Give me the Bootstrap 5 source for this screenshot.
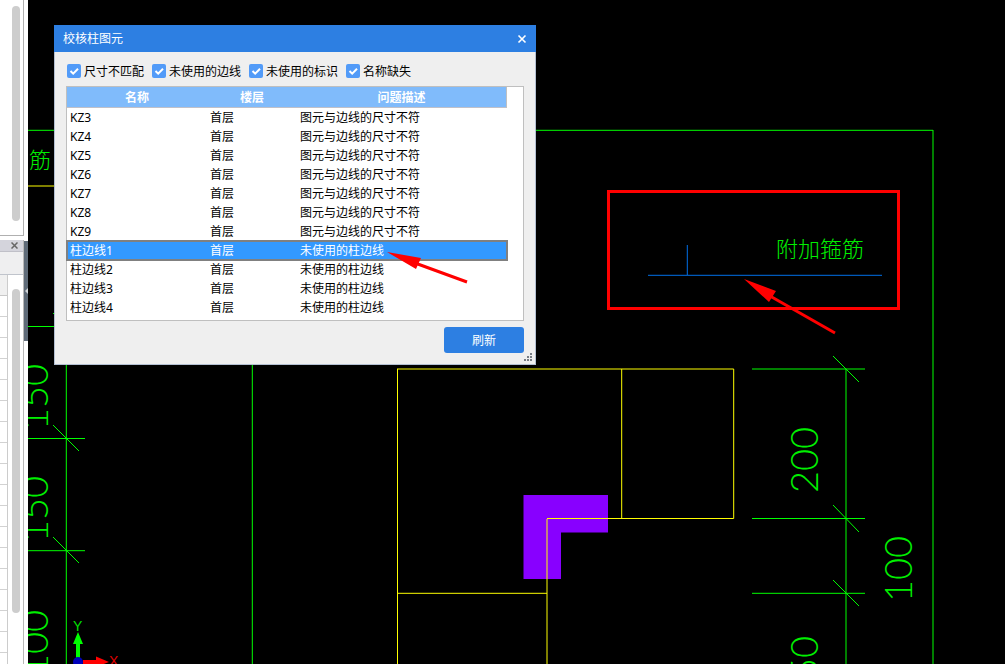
<!DOCTYPE html>
<html lang="zh-CN">
<head>
<meta charset="utf-8">
<meta name="viewport" content="width=device-width, initial-scale=1">
<title>校核柱图元</title>
<link href="https://cdn.jsdelivr.net/npm/bootstrap@5.3.0/dist/css/bootstrap.min.css" rel="stylesheet">
<style>
body{font-family:"Noto Sans","Noto Sans CJK SC",sans-serif;font-size:12px;line-height:19px;color:#000;background:#000}
.side{width:24px;background:#fff}
.side-top{height:236px;border-right:1px solid #b0b0b0;border-bottom:1px solid #b0b0b0;padding:6px 3px 14px 0}
.side-low{border-right:1px solid #b8b8b8;margin-top:4px;overflow:hidden}
.thumb{width:8px;border-radius:4px;background:#cdcdcd}
.side-head{height:12px;background:#d4d4dc;border:0;border-bottom:1px solid #c0c0c8;padding:0 5px 0 0}
.side-tools{height:23px;background:#efeff0;border-bottom:1px solid #c0c4cc}
.side-grid{width:8px;border-right:1px solid #ccc;background:repeating-linear-gradient(#fff 0 20px,#d2d2d2 20px 21px)}
.side-grid-head{height:21px;background:#f0f0f0;border-bottom:1px solid #c8c8c8}
.low-thumb{height:324px;margin:14px 3px 0 0}
.splitter{width:4px;background:#fff;padding-top:241px}
.splitter-bar{height:100px;background:#5f6b78}
.cad{background:#000}
.cad-svg{left:0;top:0;width:100%;height:100%}
.cad-text{font-family:"Noto Sans CJK SC",sans-serif;font-weight:300;fill:#00f000}
.dim-text{font-family:"Lato",sans-serif;font-weight:300;fill:#00f000}
.dlg{left:26px;top:25px;width:482px;background:#efefef;border:1px solid #b4c0d2;border-top:0}
.dlg-title{height:27px;background:#2d7fe2;color:#fff;margin:0 -1px;padding:0 9px}
.dlg-x{border:0;background:none;color:#fff;padding:0}
.dlg-body{padding:10px 11px 11px}
.checks{padding-left:1px}
.tick{appearance:none;width:14px;height:14px;border-radius:2px;margin:0 3px 1px 0;background:#529bf8 url("data:image/svg+xml,%3Csvg xmlns='http://www.w3.org/2000/svg' viewBox='0 0 14 14'%3E%3Cpath d='M3.5 7l2.7 2.7L11 4.8' fill='none' stroke='white' stroke-width='2'/%3E%3C/svg%3E")}
.listbox{margin-top:5px;height:235px;border:1px solid #bfbfbf;background:#fff}
.issues{width:440px;table-layout:fixed;border-collapse:separate;border-spacing:0}
.issues th{background:#80bbfb;color:#fff;height:21px;padding:0;text-align:center;border-bottom:1px solid #c0c0c8}
.issues th:last-child{border-right:1px solid #c0c0c0}
.issues td{height:19px;padding:0 3px;white-space:nowrap}
.issues .picked td{background:#3399ff;color:#fff}
.issues .picked{outline:2px solid #808080;outline-offset:-1px}
.c1{width:140px}.c2{width:90px}
.go{width:80px;height:26px;margin-top:6px;border:0;border-radius:3px;background:#2d7fe2;color:#fff;font-size:12px;padding:0}
.grip{right:3px;bottom:3px}
</style>
</head>
<body>
<div class="d-flex vh-100 overflow-hidden position-relative">
  <aside class="side d-flex flex-column flex-shrink-0">
    <div class="side-top d-flex justify-content-end flex-shrink-0"><div class="thumb"></div></div>
    <div class="side-low d-flex flex-column flex-grow-1">
      <button class="side-head d-flex justify-content-end align-items-center flex-shrink-0" aria-label="关闭面板"><svg width="7" height="7"><path d="M.5 .5l6 6M6.500 .5l-6 6" stroke="#666" stroke-width="1.500"/></svg></button>
      <div class="side-tools flex-shrink-0"></div>
      <div class="d-flex justify-content-between flex-grow-1">
        <div class="side-grid"><div class="side-grid-head"></div></div>
        <div class="thumb low-thumb"></div>
      </div>
    </div>
  </aside>
  <div class="splitter flex-shrink-0"><div class="splitter-bar d-flex align-items-center"><svg width="4" height="8"><path d="M4 1L1 4l3 3z" fill="#cfd4d8"/></svg></div></div>
  <main class="cad flex-grow-1 position-relative">
    <svg class="cad-svg position-absolute" aria-label="图纸">
      <g transform="translate(-28 0)">
        <g fill="none" stroke="#00ff00">
          <path d="M28 130.300H933M933 130V664M28 326.500H80M66.300 326V664M252.300 326V664M28 438.500H85M28 550.700H85"/>
          <path d="M846 369V664M752 369H865M752 518.500H865M752 593.300H865"/>
          <path d="M53 313l26 26M53 425l26 26M53 537l26 26M833 356l26 26M833 505l26 27M833 580l26 26"/>
        </g>
        <path d="M523.500 495H608V532.500H561V579H523.500z" fill="#8800ff"/>
        <g fill="none" stroke="#ffff00">
          <path d="M397.500 664V369M397 369H733.700V518.500H547M621.700 369V518M397 593.300H547M547 579V664"/>
          <path d="M28 186H60"/>
          <path d="M547 519V579" stroke="#c48080" stroke-width="2"/>
        </g>
        <path d="M648 275.300H882M687.300 245V275" stroke="#0070e8" fill="none"/>
        <g class="cad-text" font-size="22">
          <text x="776" y="257">附加箍筋</text>
          <text x="29" y="168">筋</text>
        </g>
        <g class="dim-text" font-size="38">
          <text transform="translate(818 493) rotate(-90)">200</text>
          <text transform="translate(912 602) rotate(-90)">100</text>
          <text transform="translate(818 702) rotate(-90)">150</text>
          <text transform="translate(48 430) rotate(-90)">150</text>
          <text transform="translate(48 542) rotate(-90)">150</text>
          <text transform="translate(48 676) rotate(-90)">100</text>
        </g>
        <path d="M76 658V644H73L78 632L83 644H80V658z" fill="#00ff00"/>
        <path d="M83 660H96V656.500L109 662L96 667V664H83z" fill="#ff0000"/>
        <circle cx="78" cy="662" r="5" fill="#0000bb"/>
        <g font-size="14" font-family="Liberation Sans, sans-serif"><text x="73" y="631" fill="#00e000">Y</text><text x="109" y="666" fill="#e00000">X</text></g>
      </g>
    </svg>

    <section class="dlg position-absolute" role="dialog" aria-labelledby="dlgTitle">
      <header class="dlg-title d-flex align-items-center justify-content-between">
        <span id="dlgTitle">校核柱图元</span>
        <button class="dlg-x d-flex" aria-label="关闭"><svg width="10" height="10"><path d="M1.500 1.500l7 7M8.500 1.500l-7 7" stroke="#fff" stroke-width="1.600"/></svg></button>
      </header>
      <div class="dlg-body">
        <div class="checks d-flex gap-2">
          <label class="d-flex align-items-center"><input class="tick" type="checkbox" checked>尺寸不匹配</label>
          <label class="d-flex align-items-center"><input class="tick" type="checkbox" checked>未使用的边线</label>
          <label class="d-flex align-items-center"><input class="tick" type="checkbox" checked>未使用的标识</label>
          <label class="d-flex align-items-center"><input class="tick" type="checkbox" checked>名称缺失</label>
        </div>
        <div class="listbox">
          <table class="issues">
            <colgroup><col class="c1"><col class="c2"><col></colgroup>
            <thead><tr><th>名称</th><th>楼层</th><th>问题描述</th></tr></thead>
            <tbody>
              <tr><td>KZ3</td><td>首层</td><td>图元与边线的尺寸不符</td></tr>
              <tr><td>KZ4</td><td>首层</td><td>图元与边线的尺寸不符</td></tr>
              <tr><td>KZ5</td><td>首层</td><td>图元与边线的尺寸不符</td></tr>
              <tr><td>KZ6</td><td>首层</td><td>图元与边线的尺寸不符</td></tr>
              <tr><td>KZ7</td><td>首层</td><td>图元与边线的尺寸不符</td></tr>
              <tr><td>KZ8</td><td>首层</td><td>图元与边线的尺寸不符</td></tr>
              <tr><td>KZ9</td><td>首层</td><td>图元与边线的尺寸不符</td></tr>
              <tr class="picked"><td>柱边线1</td><td>首层</td><td>未使用的柱边线</td></tr>
              <tr><td>柱边线2</td><td>首层</td><td>未使用的柱边线</td></tr>
              <tr><td>柱边线3</td><td>首层</td><td>未使用的柱边线</td></tr>
              <tr><td>柱边线4</td><td>首层</td><td>未使用的柱边线</td></tr>
            </tbody>
          </table>
        </div>
        <div class="d-flex justify-content-end"><button class="go">刷新</button></div>
      </div>
      <svg class="grip position-absolute" width="8" height="8" fill="#777c84"><path d="M6 0h2v2H6zM3 3h2v2H3zM6 3h2v2H6zM0 6h2v2H0zM3 6h2v2H3zM6 6h2v2H6z"/></svg>
    </section>

    <svg class="cad-svg position-absolute pe-none" aria-hidden="true">
      <g transform="translate(-28 0)" stroke="#f00" fill="none" stroke-width="3">
        <rect x="608.500" y="191.500" width="290" height="117"/>
        <path d="M415 263L467 282M770 296L835 333"/>
        <path d="M387 252L421 258L416 269zM744 279L776 291L769 302z" fill="#f00" stroke="none"/>
      </g>
    </svg>
  </main>
</div>
<script src="https://cdn.jsdelivr.net/npm/bootstrap@5.3.0/dist/js/bootstrap.bundle.min.js"></script>
</body>
</html>
